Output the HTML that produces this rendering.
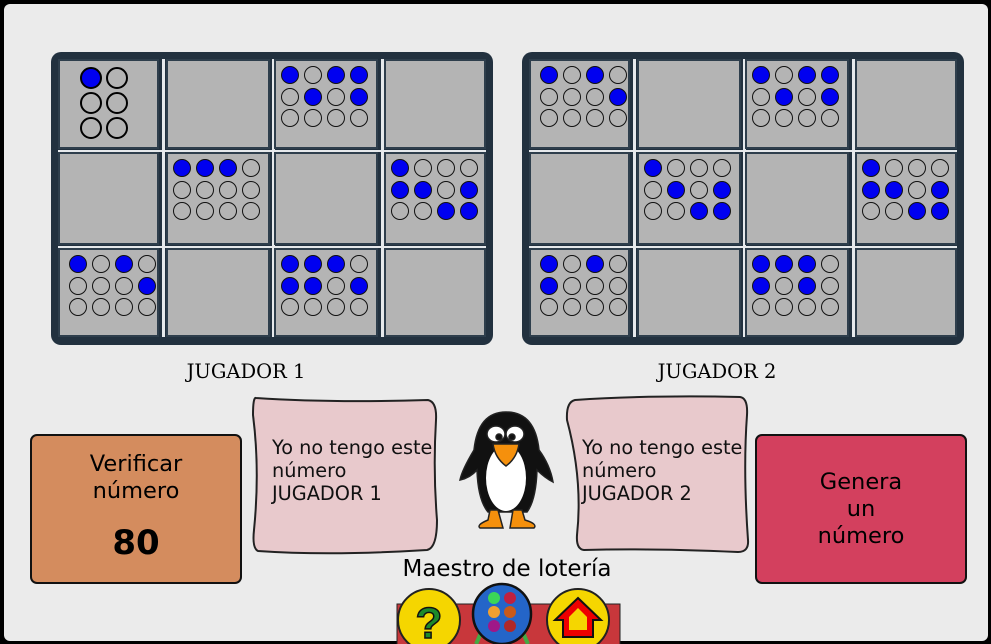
<!DOCTYPE html>
<html><head><meta charset="utf-8"><style>
*{margin:0;padding:0;box-sizing:border-box}
body{width:991px;height:644px;background:#000;position:relative;overflow:hidden;font-family:"DejaVu Sans","Liberation Sans",sans-serif}
#panel{position:absolute;left:4px;top:4px;width:984px;height:637px;background:#ebebeb;border-radius:6px}
.card{position:absolute;top:52px;width:442px;height:293px;background:#22313f;border-radius:10px}
.cell{position:absolute;background:#b4b4b4;border:2px solid #2e3e4c}
.st{position:absolute;background:#e6e9ec}
.c{position:absolute;width:18px;height:18px;border-radius:50%;border:1.3px solid #111}
.b{background:#0000f0}
.big{width:22px;height:22px;border:2.5px solid #000}
.lab{position:absolute;top:360px;font-family:"DejaVu Serif","Liberation Serif",serif;font-size:19.5px;width:240px;text-align:center}
.btn{position:absolute;top:434px;width:212px;height:150px;border:2.5px solid #111;border-radius:7px;text-align:center;font-size:22.5px;line-height:27px}
.note{position:absolute;font-size:19.3px;line-height:23px;color:#111;white-space:nowrap}
</style></head><body>
<div id="panel"></div>
<div class="card" id="k1" style="left:51px"></div>
<div class="card" id="k2" style="left:522px"></div>
<div class="lab" style="left:126px">JUGADOR 1</div>
<div class="lab" style="left:597px">JUGADOR 2</div>
<svg style="position:absolute;left:0;top:0" width="991" height="644">
<path d="M256 398 Q330 403 428 400 Q437 402 436 420 Q433 470 437 520 Q437 548 427 550 Q330 556 258 551 Q252 548 254 530 Q260 470 253 415 Q253 397 256 398Z" fill="#e8c9cc" stroke="#222" stroke-width="2"/>
<path d="M575 400 Q650 395 740 397 Q748 398 747 415 Q743 470 748 540 Q749 552 738 552 Q650 548 584 550 Q576 549 577 535 Q583 480 567 420 Q566 402 575 400Z" fill="#e8c9cc" stroke="#222" stroke-width="2"/>
<g stroke="#222" stroke-width="1.5">
<path d="M506 412 Q478 412 474 450 Q462 470 460 480 Q470 478 477 470 Q478 500 488 512 L527 512 Q536 500 537 470 Q545 478 553 482 Q550 465 539 450 Q535 412 506 412Z" fill="#111"/>
<ellipse cx="506" cy="478" rx="20" ry="33" fill="#fff" stroke="none"/>
<ellipse cx="496" cy="434" rx="9" ry="8" fill="#fff"/><ellipse cx="515" cy="434" rx="9" ry="8" fill="#fff"/>
<circle cx="499" cy="437" r="3" fill="#111"/><circle cx="512" cy="437" r="3" fill="#111"/>
<path d="M493 444 L519 444 Q517 458 506 466 Q495 458 493 444Z" fill="#f5900c"/>
<path d="M490 510 L488 520 Q476 525 480 528 L503 528 L498 510Z M513 510 L510 528 L534 528 Q538 524 525 520 L522 510Z" fill="#f5900c"/>
</g>
<rect x="397" y="604" width="223" height="42" fill="#c8373b" stroke="#222"/>
<circle cx="429" cy="620" r="31" fill="#f5d600" stroke="#222" stroke-width="2"/>
<text x="429" y="638" font-size="44" font-weight="bold" fill="#1e8a2a" stroke="#111" stroke-width="1.5" text-anchor="middle" font-family="Liberation Sans">?</text>
<circle cx="578" cy="620" r="31" fill="#f5d600" stroke="#222" stroke-width="2"/>
<path d="M578 598 L601 620 L593 620 L593 637 L563 637 L563 620 L555 620Z" fill="#e00" stroke="#111" stroke-width="2"/>
<path d="M578 608 L587 617 L587 630 L569 630 L569 617Z" fill="#f5d600"/>
<path d="M482 630 Q478 640 476 644 M522 630 Q526 640 528 644" stroke="#4a4" stroke-width="4" fill="none"/>
<ellipse cx="502" cy="614" rx="29" ry="30" fill="#2465c8" stroke="#111" stroke-width="2.5"/>
<circle cx="494" cy="598" r="6" fill="#3bd658"/><circle cx="510" cy="598" r="6" fill="#c02040"/>
<circle cx="494" cy="612" r="6" fill="#f0a030"/><circle cx="510" cy="612" r="6" fill="#c85a1a"/>
<circle cx="494" cy="626" r="6" fill="#a01888"/><circle cx="510" cy="626" r="6" fill="#b02828"/>
</svg>
<div class="note" style="left:272px;top:436px">Yo no tengo este<br>número<br>JUGADOR 1</div>
<div class="note" style="left:582px;top:436px">Yo no tengo este<br>número<br>JUGADOR 2</div>
<div class="btn" style="left:30px;background:#d48c5e;padding-top:15px">Verificar<br>número<div style="font-size:34px;font-weight:bold;margin-top:25px">80</div></div>
<div class="btn" style="left:755px;background:#d3405e;padding-top:33px">Genera<br>un<br>número</div>
<div style="position:absolute;left:370px;width:274px;top:556px;text-align:center;font-size:23px">Maestro de lotería</div>
<script>
var cols=[[7,108],[115,219],[223,327],[333,435]],rows=[[7,97],[100,193],[196,285]];
var P1={"0,0":"S","0,2":"1011/0101/0000","1,1":"1110/0000/0000","1,3":"1000/1101/0011","2,0":"1010/0001/0000","2,2":"1110/1101/0000"};
var P2={"0,0":"1010/0001/0000","0,2":"1011/0101/0000","1,1":"1000/0101/0011","1,3":"1000/1101/0011","2,0":"1010/1000/0000","2,2":"1110/1010/0000"};
function build(id,P){var k=document.getElementById(id),h="";
[110,220,329].forEach(function(x){h+='<div class="st" style="left:'+(x+1)+'px;top:7px;width:3px;height:278px"></div>';});
[97,193].forEach(function(y){h+='<div class="st" style="left:7px;top:'+(y+1)+'px;width:428px;height:2px"></div>';});
for(var r=0;r<3;r++)for(var c=0;c<4;c++){var x=cols[c][0],y=rows[r][0],w=cols[c][1]-x,hh=rows[r][1]-y;
h+='<div class="cell" style="left:'+x+'px;top:'+y+'px;width:'+w+'px;height:'+hh+'px"></div>';
var p=P[r+","+c];if(!p)continue;
if(p=="S"){for(var i=0;i<3;i++)for(var j=0;j<2;j++)h+='<div class="c big'+(i==0&&j==0?' b':'')+'" style="left:'+(29+j*26)+'px;top:'+(15+i*25)+'px"></div>';continue;}
var L=p.split("/"),ox=x+(c==0?11:7),oy=y+7;
for(var i=0;i<3;i++)for(var j=0;j<4;j++)h+='<div class="c'+(L[i][j]=="1"?' b':'')+'" style="left:'+(ox+j*23)+'px;top:'+(oy+i*21.5)+'px;z-index:2"></div>';}
k.innerHTML=h;}
build("k1",P1);build("k2",P2);
</script>
</body></html>
